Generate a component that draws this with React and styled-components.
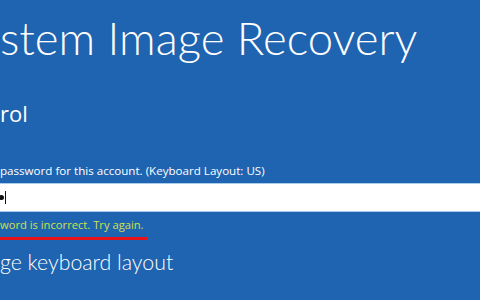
import styled, { createGlobalStyle } from "styled-components";

const GlobalStyle = createGlobalStyle`
  html, body {
    margin: 0;
    padding: 0;
    overflow: hidden;
  }
`;

// The shot is a crop of the full recovery screen: the left edge cuts each line.
export default function App() {
  return (
    <>
      <GlobalStyle />
      <Screen>
        <Title>stem Image Recovery</Title>
        <Account>rol</Account>
        <Prompt>password for this account. (Keyboard Layout: US)</Prompt>
        <PasswordField>
          <Dot />
          <Caret />
        </PasswordField>
        <ErrorText>word is incorrect. Try again.</ErrorText>
        <LinkText>ge keyboard layout</LinkText>
      </Screen>
    </>
  );
}

const Screen = styled.div`
  display: flex;
  flex-direction: column;
  align-items: flex-start;
  width: 480px;
  height: 300px;
  overflow: hidden;
  box-sizing: border-box;
  padding-top: 8px;
  background: #1f64b0;
  color: #ffffff;
  font-family: "Open Sans", "Noto Sans", sans-serif;
`;

const Title = styled.h1`
  margin: 0;
  font-family: Lato, "Open Sans", sans-serif;
  font-size: 45.5px;
  font-weight: 300;
  line-height: 60px;
  white-space: nowrap;
`;

const Account = styled.div`
  margin-top: 30px;
  font-size: 22px;
  line-height: 30px;
  white-space: nowrap;
`;

const Prompt = styled.div`
  margin-top: 34px;
  font-size: 11.6px;
  line-height: 18px;
  white-space: nowrap;
`;

const PasswordField = styled.div`
  box-sizing: border-box;
  display: flex;
  align-items: center;
  gap: 1px;
  width: 100%;
  height: 29px;
  margin-top: 3px;
  background: #ffffff;
  border-top: 1px solid #a9cbec;
  border-bottom: 1px solid #a9cbec;
`;

const Dot = styled.span`
  width: 5px;
  height: 5px;
  margin-left: -1px;
  border-radius: 50%;
  background: #111111;
`;

const Caret = styled.span`
  width: 1px;
  height: 13px;
  background: #111111;
`;

const ErrorText = styled.div`
  margin-top: 4px;
  padding: 0 3px 4px 0;
  border-bottom: 3px solid #e8121b;
  color: #cfe04a;
  font-size: 11.2px;
  line-height: 17px;
  white-space: nowrap;
`;

const LinkText = styled.div`
  margin-top: 7px;
  font-family: Lato, "Open Sans", sans-serif;
  font-size: 21.3px;
  font-weight: 300;
  line-height: 30px;
  white-space: nowrap;
`;
